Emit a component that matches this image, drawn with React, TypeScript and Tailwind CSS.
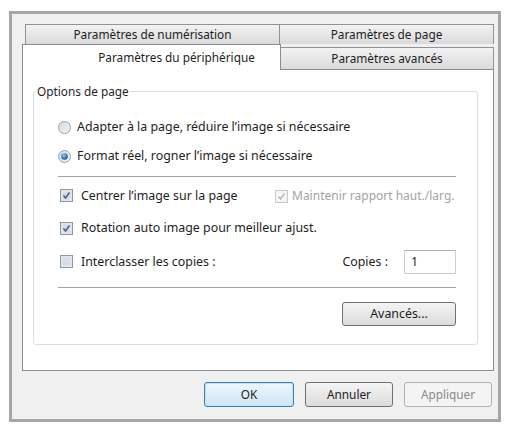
import React from "react"

/**
 * Boîte de dialogue Windows 7 - "Paramètres du périphérique"
 * Cadre → onglets sur deux rangées → panneau avec groupe "Options de page" → boutons OK / Annuler / Appliquer
 */

function Radio({ checked }: { checked?: boolean }) {
  return (
    <svg width="13" height="13" viewBox="0 0 13 13" className="shrink-0">
      <defs>
        <linearGradient id={checked ? "rg-on" : "rg-off"} x1="0" y1="0" x2="1" y2="1">
          <stop offset="0" stopColor="#d8d8d8" />
          <stop offset="1" stopColor="#f4f4f4" />
        </linearGradient>
        <radialGradient id="dot" cx="0.4" cy="0.35" r="0.7">
          <stop offset="0" stopColor="#8fd3f5" />
          <stop offset="0.6" stopColor="#2a7fc0" />
          <stop offset="1" stopColor="#1b4f86" />
        </radialGradient>
      </defs>
      <circle cx="6.5" cy="6.5" r="6" fill={`url(#${checked ? "rg-on" : "rg-off"})`} stroke="#9aa3aa" />
      {checked && <circle cx="6.5" cy="6.5" r="3.3" fill="url(#dot)" />}
    </svg>
  )
}

function Check({ checked, disabled }: { checked?: boolean; disabled?: boolean }) {
  return (
    <svg width="13" height="13" viewBox="0 0 13 13" className="shrink-0">
      <rect
        x="0.5"
        y="0.5"
        width="12"
        height="12"
        fill={disabled ? "#f4f4f4" : "#e4e8ee"}
        stroke={disabled ? "#c8c8c8" : "#8e98a3"}
      />
      <rect x="2.5" y="2.5" width="8" height="8" fill={disabled ? "#f7f7f7" : "#d6dde6"} />
      {checked && (
        <path
          d="M3.5 6.5 L5.5 9 L9.5 3.5"
          fill="none"
          stroke={disabled ? "#b8b8b8" : "#4a5a80"}
          strokeWidth="1.4"
        />
      )}
    </svg>
  )
}

export default function App() {
  const tabBack =
    "flex h-[20px] items-center justify-center border border-b-0 border-[#8f9396] bg-gradient-to-b from-[#f3f3f3] to-[#dadada]"

  return (
    <div
      className="h-[426px] w-[509px] bg-white pl-[9px] pt-[11px] text-[11.8px] text-[#1e1e1e]"
      style={{ fontFamily: '"Noto Sans", "Open Sans", sans-serif' }}
    >
      {/* Cadre de la fenêtre */}
      <div className="h-[411px] w-[492px] border-[3px] border-[#a6a6a6] bg-[#f0f0f0] pl-[10px] pr-[4px] pt-[10px]">
        {/* Rangée arrière des onglets */}
        <div className="flex pl-[3px] leading-none">
          <div className={`${tabBack} w-[255px]`}>Paramètres de numérisation</div>
          <div className={`${tabBack} w-[214px] border-l-0`}>Paramètres de page</div>
        </div>

        {/* Rangée avant des onglets */}
        <div className="relative z-10 -mb-px flex h-[26px] leading-none">
          <div className="flex h-[26px] w-[259px] items-center justify-center border border-b-0 border-[#898c95] bg-white pl-[50px]">
            Paramètres du périphérique
          </div>
          <div className="mt-[3px] flex h-[22px] w-[213px] items-center justify-center border border-b-0 border-l-0 border-[#8f9396] bg-gradient-to-b from-[#f3f3f3] to-[#dadada]">
            Paramètres avancés
          </div>
        </div>

        {/* Panneau */}
        <div className="h-[302px] w-[472px] border border-[#898c95] bg-white pl-[10px] pr-[15px] pt-[21px]">
          {/* Groupe Options de page */}
          <div className="relative h-[254px] rounded-[3px] border border-[#d5dfe5] pl-[24px] pr-[21px] pt-[25px] text-[12.4px]">
            <span className="absolute -top-[9px] left-[2px] bg-white px-[1px] text-[11.8px] leading-[16px]">
              Options de page
            </span>

            <div className="flex h-[20px] items-center gap-[6px]">
              <Radio />
              <span>Adapter à la page, réduire l’image si nécessaire</span>
            </div>
            <div className="mt-[9px] flex h-[20px] items-center gap-[6px]">
              <Radio checked />
              <span>Format réel, rogner l’image si nécessaire</span>
            </div>

            <div className="mt-[10px] h-px bg-[#a0a0a0]" />

            <div className="mt-[9px] flex h-[20px] items-center whitespace-nowrap">
              <div className="flex w-[217px] shrink-0 items-center gap-[8px] pl-[2px]">
                <Check checked />
                <span>Centrer l’image sur la page</span>
              </div>
              <div className="flex items-center gap-[4px] text-[12px] text-[#a3a3a3]">
                <Check checked disabled />
                <span>Maintenir rapport haut./larg.</span>
              </div>
            </div>

            <div className="mt-[12px] flex h-[20px] items-center gap-[8px] pl-[2px]">
              <Check checked />
              <span>Rotation auto image pour meilleur ajust.</span>
            </div>

            <div className="mt-[12px] flex h-[24px] items-center">
              <div className="flex flex-1 items-center gap-[8px] pl-[2px]">
                <Check />
                <span>Interclasser les copies :</span>
              </div>
              <span>Copies :</span>
              <div className="ml-[16px] flex h-[24px] w-[52px] items-center border border-[#c9ced6] border-t-[#aab1ba] pl-[6px]">
                1
              </div>
            </div>

            <div className="mt-[13px] h-px bg-[#a0a0a0]" />

            <div className="mt-[14px] flex justify-end">
              <button className="h-[24px] w-[114px] rounded-[3px] border border-[#707070] bg-gradient-to-b from-[#f4f4f4] to-[#dcdcdc]">
                Avancés...
              </button>
            </div>
          </div>
        </div>

        {/* Boutons du bas */}
        <div className="mt-[11px] flex justify-end gap-[11px] pr-[2px]">
          <button className="h-[25px] w-[90px] rounded-[3px] border border-[#3c7fb1] bg-gradient-to-b from-[#eef6fb] to-[#cfe6f4] shadow-[inset_0_0_0_1px_#bfe4f8]">
            OK
          </button>
          <button className="h-[25px] w-[88px] rounded-[3px] border border-[#707070] bg-gradient-to-b from-[#f4f4f4] to-[#dcdcdc]">
            Annuler
          </button>
          <button className="h-[25px] w-[88px] rounded-[3px] border border-[#adb2b5] bg-[#f4f4f4] text-[#8a8a8a]">
            Appliquer
          </button>
        </div>
      </div>
    </div>
  )
}
